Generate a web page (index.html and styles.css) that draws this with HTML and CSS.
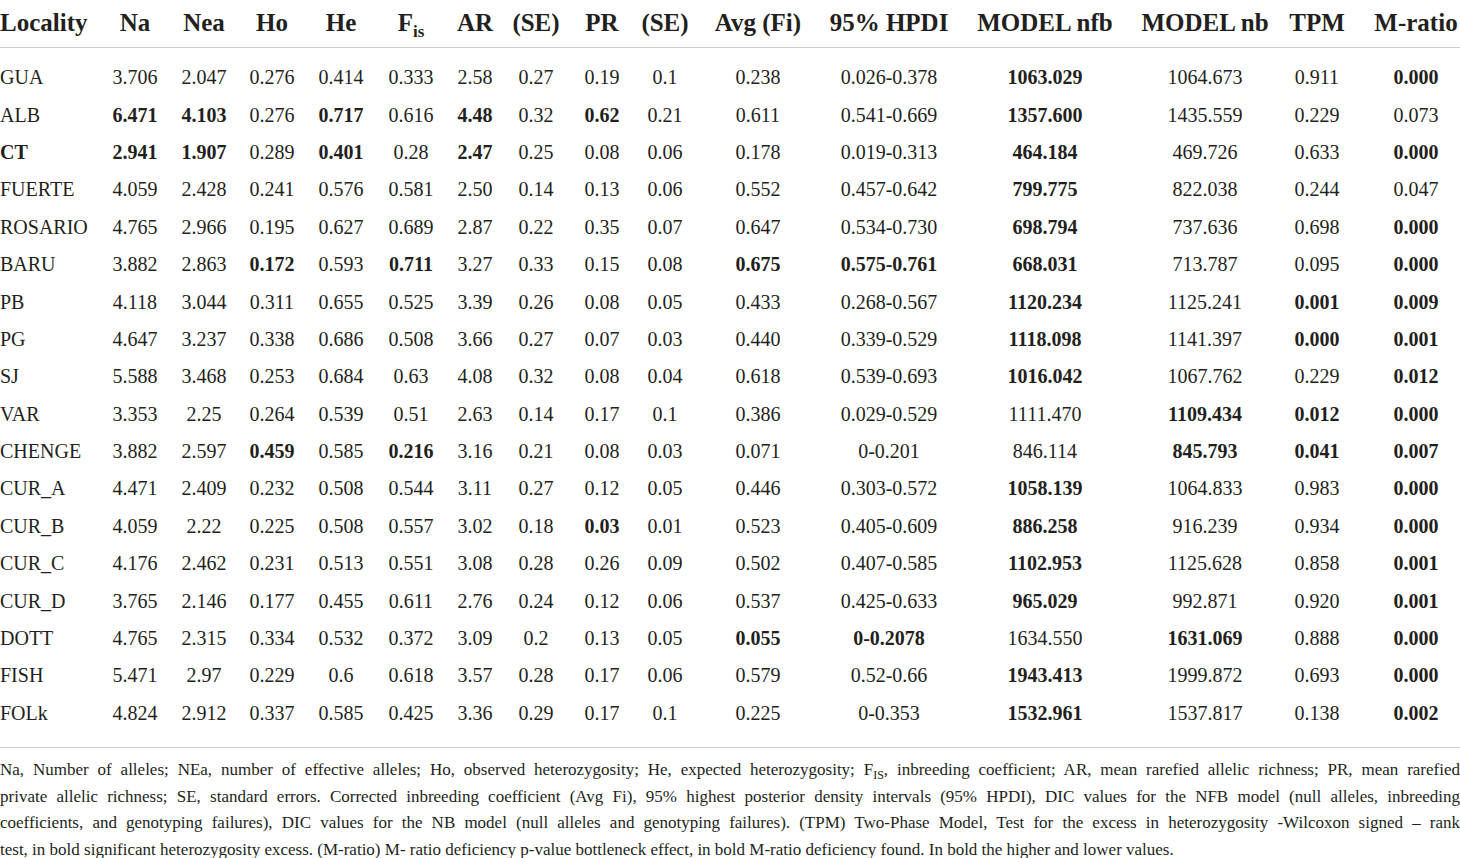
FILE: index.html
```html
<!DOCTYPE html>
<html lang="en">
<head>
  <meta charset="UTF-8">
  <title>Genetic diversity by locality</title>
  <link rel="stylesheet" href="styles.css">
</head>
<body>

  <table class="stats">
    <colgroup>
      <col class="c-loc"><col class="c-na"><col class="c-nea"><col class="c-ho"><col class="c-he">
      <col class="c-fis"><col class="c-ar"><col class="c-se"><col class="c-pr"><col class="c-se2">
      <col class="c-avg"><col class="c-hpdi"><col class="c-nfb"><col class="c-nb"><col class="c-tpm"><col class="c-m">
    </colgroup>
    <thead>
      <tr>
        <th class="loc">Locality</th><th>Na</th><th>Nea</th><th>Ho</th><th>He</th>
        <th>F<sub>is</sub></th><th>AR</th><th>(SE)</th><th>PR</th><th>(SE)</th>
        <th>Avg (Fi)</th><th>95% HPDI</th><th>MODEL nfb</th><th>MODEL nb</th><th>TPM</th><th class="mr">M-ratio</th>
      </tr>
    </thead>
    <tbody>
      <tr><td class="loc">GUA</td><td>3.706</td><td>2.047</td><td>0.276</td><td>0.414</td><td>0.333</td><td>2.58</td><td>0.27</td><td>0.19</td><td>0.1</td><td>0.238</td><td>0.026-0.378</td><td><b>1063.029</b></td><td>1064.673</td><td>0.911</td><td class="mr"><b>0.000</b></td></tr>
      <tr><td class="loc">ALB</td><td><b>6.471</b></td><td><b>4.103</b></td><td>0.276</td><td><b>0.717</b></td><td>0.616</td><td><b>4.48</b></td><td>0.32</td><td><b>0.62</b></td><td>0.21</td><td>0.611</td><td>0.541-0.669</td><td><b>1357.600</b></td><td>1435.559</td><td>0.229</td><td class="mr">0.073</td></tr>
      <tr><td class="loc"><b>CT</b></td><td><b>2.941</b></td><td><b>1.907</b></td><td>0.289</td><td><b>0.401</b></td><td>0.28</td><td><b>2.47</b></td><td>0.25</td><td>0.08</td><td>0.06</td><td>0.178</td><td>0.019-0.313</td><td><b>464.184</b></td><td>469.726</td><td>0.633</td><td class="mr"><b>0.000</b></td></tr>
      <tr><td class="loc">FUERTE</td><td>4.059</td><td>2.428</td><td>0.241</td><td>0.576</td><td>0.581</td><td>2.50</td><td>0.14</td><td>0.13</td><td>0.06</td><td>0.552</td><td>0.457-0.642</td><td><b>799.775</b></td><td>822.038</td><td>0.244</td><td class="mr">0.047</td></tr>
      <tr><td class="loc">ROSARIO</td><td>4.765</td><td>2.966</td><td>0.195</td><td>0.627</td><td>0.689</td><td>2.87</td><td>0.22</td><td>0.35</td><td>0.07</td><td>0.647</td><td>0.534-0.730</td><td><b>698.794</b></td><td>737.636</td><td>0.698</td><td class="mr"><b>0.000</b></td></tr>
      <tr><td class="loc">BARU</td><td>3.882</td><td>2.863</td><td><b>0.172</b></td><td>0.593</td><td><b>0.711</b></td><td>3.27</td><td>0.33</td><td>0.15</td><td>0.08</td><td><b>0.675</b></td><td><b>0.575-0.761</b></td><td><b>668.031</b></td><td>713.787</td><td>0.095</td><td class="mr"><b>0.000</b></td></tr>
      <tr><td class="loc">PB</td><td>4.118</td><td>3.044</td><td>0.311</td><td>0.655</td><td>0.525</td><td>3.39</td><td>0.26</td><td>0.08</td><td>0.05</td><td>0.433</td><td>0.268-0.567</td><td><b>1120.234</b></td><td>1125.241</td><td><b>0.001</b></td><td class="mr"><b>0.009</b></td></tr>
      <tr><td class="loc">PG</td><td>4.647</td><td>3.237</td><td>0.338</td><td>0.686</td><td>0.508</td><td>3.66</td><td>0.27</td><td>0.07</td><td>0.03</td><td>0.440</td><td>0.339-0.529</td><td><b>1118.098</b></td><td>1141.397</td><td><b>0.000</b></td><td class="mr"><b>0.001</b></td></tr>
      <tr><td class="loc">SJ</td><td>5.588</td><td>3.468</td><td>0.253</td><td>0.684</td><td>0.63</td><td>4.08</td><td>0.32</td><td>0.08</td><td>0.04</td><td>0.618</td><td>0.539-0.693</td><td><b>1016.042</b></td><td>1067.762</td><td>0.229</td><td class="mr"><b>0.012</b></td></tr>
      <tr><td class="loc">VAR</td><td>3.353</td><td>2.25</td><td>0.264</td><td>0.539</td><td>0.51</td><td>2.63</td><td>0.14</td><td>0.17</td><td>0.1</td><td>0.386</td><td>0.029-0.529</td><td>1111.470</td><td><b>1109.434</b></td><td><b>0.012</b></td><td class="mr"><b>0.000</b></td></tr>
      <tr><td class="loc">CHENGE</td><td>3.882</td><td>2.597</td><td><b>0.459</b></td><td>0.585</td><td><b>0.216</b></td><td>3.16</td><td>0.21</td><td>0.08</td><td>0.03</td><td>0.071</td><td>0-0.201</td><td>846.114</td><td><b>845.793</b></td><td><b>0.041</b></td><td class="mr"><b>0.007</b></td></tr>
      <tr><td class="loc">CUR_A</td><td>4.471</td><td>2.409</td><td>0.232</td><td>0.508</td><td>0.544</td><td>3.11</td><td>0.27</td><td>0.12</td><td>0.05</td><td>0.446</td><td>0.303-0.572</td><td><b>1058.139</b></td><td>1064.833</td><td>0.983</td><td class="mr"><b>0.000</b></td></tr>
      <tr><td class="loc">CUR_B</td><td>4.059</td><td>2.22</td><td>0.225</td><td>0.508</td><td>0.557</td><td>3.02</td><td>0.18</td><td><b>0.03</b></td><td>0.01</td><td>0.523</td><td>0.405-0.609</td><td><b>886.258</b></td><td>916.239</td><td>0.934</td><td class="mr"><b>0.000</b></td></tr>
      <tr><td class="loc">CUR_C</td><td>4.176</td><td>2.462</td><td>0.231</td><td>0.513</td><td>0.551</td><td>3.08</td><td>0.28</td><td>0.26</td><td>0.09</td><td>0.502</td><td>0.407-0.585</td><td><b>1102.953</b></td><td>1125.628</td><td>0.858</td><td class="mr"><b>0.001</b></td></tr>
      <tr><td class="loc">CUR_D</td><td>3.765</td><td>2.146</td><td>0.177</td><td>0.455</td><td>0.611</td><td>2.76</td><td>0.24</td><td>0.12</td><td>0.06</td><td>0.537</td><td>0.425-0.633</td><td><b>965.029</b></td><td>992.871</td><td>0.920</td><td class="mr"><b>0.001</b></td></tr>
      <tr><td class="loc">DOTT</td><td>4.765</td><td>2.315</td><td>0.334</td><td>0.532</td><td>0.372</td><td>3.09</td><td>0.2</td><td>0.13</td><td>0.05</td><td><b>0.055</b></td><td><b>0-0.2078</b></td><td>1634.550</td><td><b>1631.069</b></td><td>0.888</td><td class="mr"><b>0.000</b></td></tr>
      <tr><td class="loc">FISH</td><td>5.471</td><td>2.97</td><td>0.229</td><td>0.6</td><td>0.618</td><td>3.57</td><td>0.28</td><td>0.17</td><td>0.06</td><td>0.579</td><td>0.52-0.66</td><td><b>1943.413</b></td><td>1999.872</td><td>0.693</td><td class="mr"><b>0.000</b></td></tr>
      <tr><td class="loc">FOLk</td><td>4.824</td><td>2.912</td><td>0.337</td><td>0.585</td><td>0.425</td><td>3.36</td><td>0.29</td><td>0.17</td><td>0.1</td><td>0.225</td><td>0-0.353</td><td><b>1532.961</b></td><td>1537.817</td><td>0.138</td><td class="mr"><b>0.002</b></td></tr>
    </tbody>
  </table>

  <div class="notes">
    <span class="line">Na, Number of alleles; NEa, number of effective alleles; Ho, observed heterozygosity; He, expected heterozygosity; F<sub>IS</sub>, inbreeding coefficient; AR, mean rarefied allelic richness; PR, mean rarefied</span>
    <span class="line">private allelic richness; SE, standard errors. Corrected inbreeding coefficient (Avg Fi), 95% highest posterior density intervals (95% HPDI), DIC values for the NFB model (null alleles, inbreeding</span>
    <span class="line">coefficients, and genotyping failures), DIC values for the NB model (null alleles and genotyping failures). (TPM) Two-Phase Model, Test for the excess in heterozygosity -Wilcoxon signed – rank</span>
    <span class="line last">test, in bold significant heterozygosity excess. (M-ratio) M- ratio deficiency p-value bottleneck effect, in bold M-ratio deficiency found. In bold the higher and lower values.</span>
  </div>

</body>
</html>
```

FILE: styles.css
```css
body {
  margin: 0;
  font-family: 'Liberation Serif', 'Times New Roman', serif;
  color: #231f20;
  background-color: #ffffff;
  overflow: hidden;
}

.stats {
  width: 1460px;
  table-layout: fixed;
  border-collapse: collapse;
}

.c-loc { width: 100px; }
.c-na { width: 70px; }
.c-nea { width: 68px; }
.c-ho { width: 68px; }
.c-he { width: 70px; }
.c-fis { width: 70px; }
.c-ar { width: 58px; }
.c-se { width: 64px; }
.c-pr { width: 68px; }
.c-se2 { width: 58px; }
.c-avg { width: 128px; }
.c-hpdi { width: 134px; }
.c-nfb { width: 178px; }
.c-nb { width: 142px; }
.c-tpm { width: 82px; }
.c-m { width: 102px; }

.stats th,
.stats td {
  padding: 0;
  text-align: center;
  white-space: nowrap;
}

.stats th {
  height: 45px;
  font-size: 25px;
  font-weight: bold;
  vertical-align: middle;
  padding-bottom: 2px;
  border-bottom: 1px solid #cccccc;
}

.stats th sub {
  font-size: 17px;
  vertical-align: -6px;
  line-height: 0;
}

.stats td {
  height: 37.4px;
  font-size: 20px;
}

.stats .loc {
  text-align: left;
}

.stats .mr {
  padding-left: 14px;
}

.stats tbody tr:first-child td {
  padding-top: 11px;
}

.stats tbody tr:last-child td {
  padding-bottom: 15px;
  border-bottom: 1px solid #cccccc;
}

.notes {
  margin-top: 9px;
  font-size: 17px;
  line-height: 26.7px;
}

.notes .line {
  display: block;
  text-align: justify;
  text-align-last: justify;
  white-space: nowrap;
}

.notes .line.last {
  text-align-last: left;
}

.notes sub {
  font-size: 12px;
  line-height: 0;
}
```
